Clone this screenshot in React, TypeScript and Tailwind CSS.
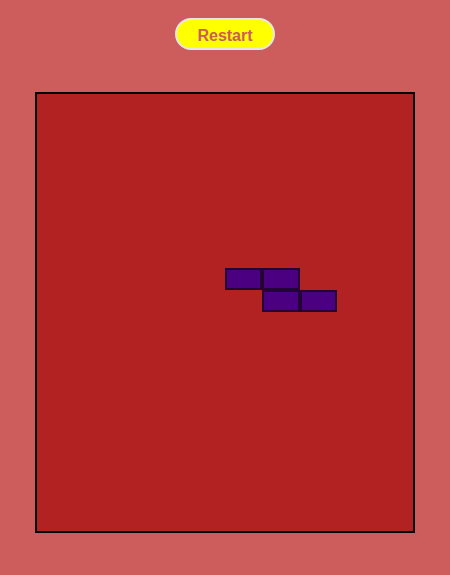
export default function App() {
  const cells: Record<string, boolean> = { "8-5": true, "8-6": true, "9-6": true, "9-7": true };
  const rows = Array.from({ length: 20 }, (_, r) => r);
  const cols = Array.from({ length: 10 }, (_, c) => c);
  return (
    <div className="w-[450px] h-[575px] bg-[#cd5c5c] flex flex-col items-center pt-[18px]" style={{ fontFamily: '"Liberation Sans", Arial, sans-serif' }}>
      <button className="w-[100px] h-[32px] rounded-full bg-[#ffff00] border-2 border-[#e6e6e6] text-[#cd5c5c] font-bold text-[16px] leading-none pt-[3px]">
        Restart
      </button>
      <div className="mt-[42px] w-[380px] h-[441px] border-2 border-black bg-[#b22222] grid grid-cols-10 grid-rows-[repeat(20,minmax(0,1fr))] pr-[1px] pb-[1px]">
        {rows.map((r) =>
          cols.map((c) => (
            <div key={`${r}-${c}`} className={cells[`${r}-${c}`] ? "bg-[#4b0082] border-2 border-[#1a0520]/80" : ""} />
          ))
        )}
      </div>
    </div>
  );
}
